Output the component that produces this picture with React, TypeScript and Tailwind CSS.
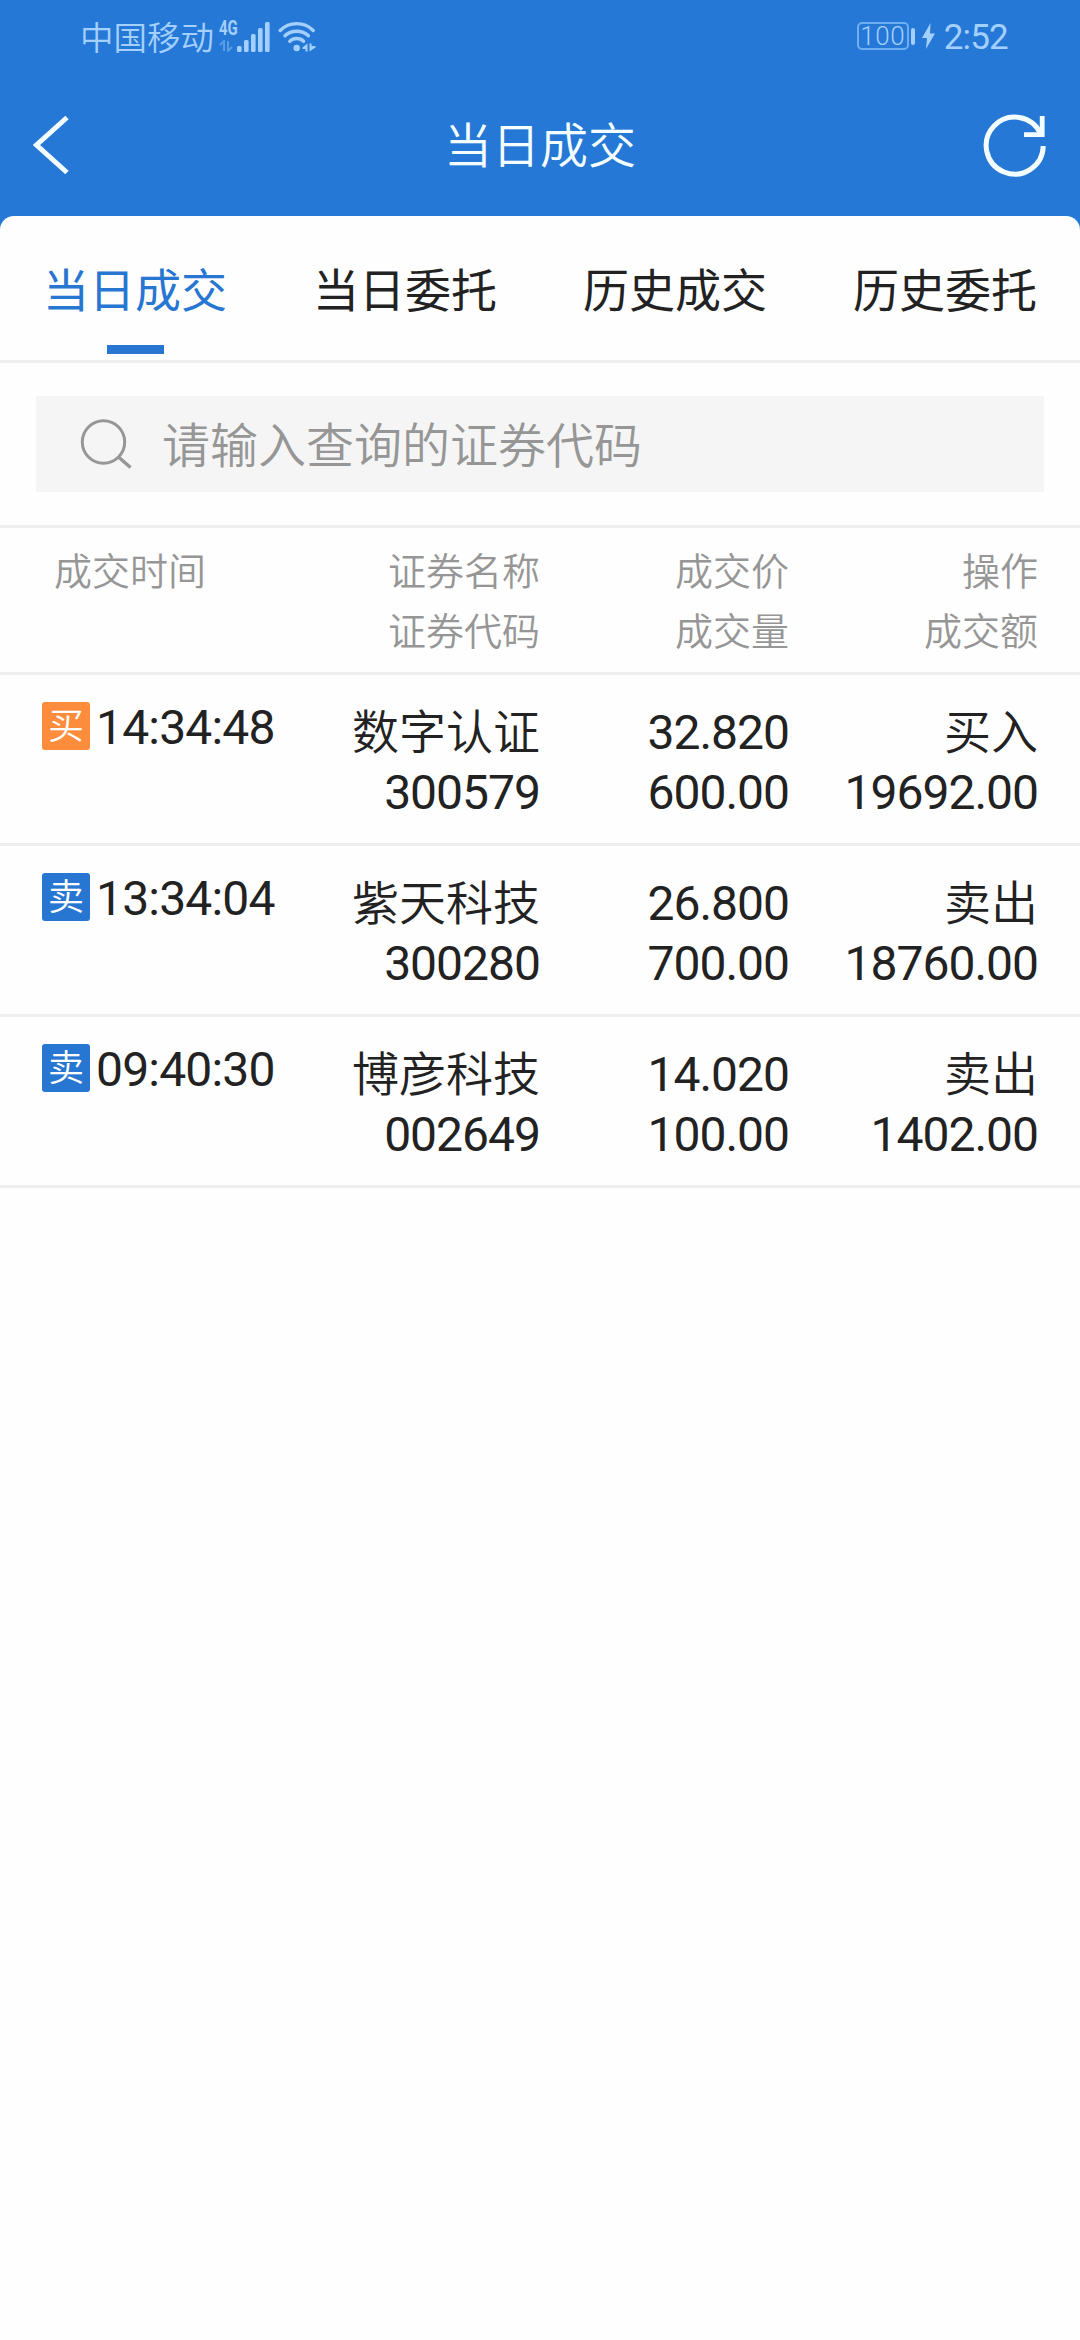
import classNames from 'clsx';
import type { FC, ReactNode } from 'react';

type Trade = {
  side: 'buy' | 'sell';
  time: string;
  name: string;
  code: string;
  price: string;
  volume: string;
  amount: string;
};

const tabs = ['当日成交', '当日委托', '历史成交', '历史委托'];

const trades: Trade[] = [
  {
    side: 'buy',
    time: '14:34:48',
    name: '数字认证',
    code: '300579',
    price: '32.820',
    volume: '600.00',
    amount: '19692.00',
  },
  {
    side: 'sell',
    time: '13:34:04',
    name: '紫天科技',
    code: '300280',
    price: '26.800',
    volume: '700.00',
    amount: '18760.00',
  },
  {
    side: 'sell',
    time: '09:40:30',
    name: '博彦科技',
    code: '002649',
    price: '14.020',
    volume: '100.00',
    amount: '1402.00',
  },
];

const StatusBar: FC = () => (
  <div className="flex h-[72px] items-center justify-between pl-20 pr-[72px] text-[#a3d0ff]">
    <div className="flex items-center">
      <span className="pt-[5px] text-[33.5px] leading-none font-[350]">中国移动</span>
      <div className="ml-[5px] flex h-[31px] w-[18px] flex-col items-start">
        <span className="origin-left scale-x-75 text-[20px] leading-[15px] font-bold">
          4G
        </span>
        <svg width="14" height="12" viewBox="0 0 14 12" className="mt-1 opacity-40">
          <path d="M1 5L5 1v10M9 1v10l4-4" fill="none" stroke="currentColor" strokeWidth="2" />
        </svg>
      </div>
      <svg width="33" height="31" viewBox="0 0 33 31" fill="currentColor">
        <rect x="0" y="25" width="4.6" height="6" rx="1.5" />
        <rect x="7" y="19" width="4.6" height="12" rx="1.5" />
        <rect x="14" y="13" width="4.6" height="18" rx="1.5" />
        <rect x="21" y="7" width="4.6" height="24" rx="1.5" />
        <rect x="28" y="1" width="4.6" height="30" rx="1.5" />
      </svg>
      <svg
        width="38"
        height="31"
        viewBox="0 0 38 31"
        fill="none"
        stroke="currentColor"
        strokeWidth="3.4"
        strokeLinecap="round"
        className="ml-2"
      >
        <path d="M2.2 9.5Q9 2.6 18.7 2.6T35.2 9.5" />
        <path d="M7 14.8q4.8-4.6 11.7-4.6t11.7 4.6" />
        <path d="M11.8 20.2q2.8-2.7 6.9-2.7t6.9 2.7" />
        <circle cx="18.7" cy="27" r="3.2" fill="currentColor" stroke="none" />
        <path
          d="M24.500 28v-1.500l5-4v8h-2v-2.500zM31.500 22.500h2v2.500h4v1.500l-6 4z"
          fill="currentColor"
          stroke="none"
        />
      </svg>
    </div>
    <div className="flex items-center">
      <div className="flex h-7 w-[52px] items-center justify-center rounded-[5px] border-2 border-[#6faef0] text-[26px] leading-none font-light tracking-[0.5px]">
        100
      </div>
      <div className="ml-0.5 h-[17px] w-1 rounded-full bg-[#a3d0ff]" />
      <svg width="13" height="26" viewBox="0 0 13 26" fill="currentColor" className="ml-[7px]">
        <path d="M8.5 0L0 15h5L4 26l9-15.5H8z" />
      </svg>
      <span className="ml-[9px] pt-0.5 text-[35px] leading-none tracking-[-0.8px]">
        2:52
      </span>
    </div>
  </div>
);

const NavBar: FC = () => (
  <div className="flex h-[144px] items-center justify-between pt-0.5 pr-[33px] pl-[33px]">
    <svg
      width="36"
      height="60"
      viewBox="0 0 36 60"
      fill="none"
      stroke="currentColor"
      strokeWidth="5"
    >
      <path d="M34 2.5L3.5 30L34 57.5" />
    </svg>
    <h1 className="pt-1 pl-7 text-[48px] leading-none font-[350]">当日成交</h1>
    <svg
      width="64"
      height="64"
      viewBox="0 0 64 64"
      fill="none"
      stroke="currentColor"
      strokeWidth="5"
    >
      <path d="M60.2 33A28.5 28.5 0 1 1 57.5 20.5" />
      <path d="M59.2 3v18.7H41" strokeWidth="4.8" />
    </svg>
  </div>
);

const Tabs: FC = () => (
  <div className="grid h-[147px] grid-cols-4 border-b-3 border-[#efefef]">
    {tabs.map((tab, index) => (
      <div
        key={tab}
        className={classNames(
          'flex flex-col items-center pt-[51px]',
          index === 0 ? 'text-[#2776d2]' : 'text-[#222222]'
        )}
      >
        <span className="text-[46px] leading-[48px]">{tab}</span>
        {index === 0 && <div className="mt-[30px] h-[9px] w-[57px] bg-[#2776d2]" />}
      </div>
    ))}
  </div>
);

const SearchBox: FC = () => (
  <div className="h-[165px] border-b-3 border-[#efefef] px-9 pt-[33px]">
    <div className="flex h-24 items-center bg-[#f5f5f5] pl-11 text-[#969696]">
      <svg
        width="54"
        height="54"
        viewBox="0 0 54 54"
        fill="none"
        stroke="currentColor"
        strokeWidth="3"
      >
        <circle cx="23.5" cy="25" r="21.2" />
        <path d="M39 40.5L50.5 50.5" strokeWidth="3.5" />
      </svg>
      <span className="ml-7 pt-[5px] text-[48px] leading-none font-[350]">
        请输入查询的证券代码
      </span>
    </div>
  </div>
);

type RowProps = { className: string; children: ReactNode };

const Row: FC<RowProps> = ({ className, children }) => (
  <div
    className={classNames(
      'grid grid-cols-[498px_249px_249px] border-b-3 border-[#efefef] pl-[42px] text-right leading-[60px]',
      className
    )}
  >
    {children}
  </div>
);

const TableHeader: FC = () => (
  <Row className="h-[147px] pt-[14px] text-[38px] font-[350] text-[#969696]">
    <div className="flex justify-between pl-3">
      <span>成交时间</span>
      <div>
        <div>证券名称</div>
        <div>证券代码</div>
      </div>
    </div>
    <div>
      <div>成交价</div>
      <div>成交量</div>
    </div>
    <div>
      <div>操作</div>
      <div>成交额</div>
    </div>
  </Row>
);

const TradeRow: FC<{ trade: Trade }> = ({ trade }) => {
  const isBuy = trade.side === 'buy';

  return (
    <Row className="h-[171px] pt-[27px] text-[48px] tracking-[-1px] text-[#222222]">
      <div className="flex items-start justify-between">
        <div className="flex items-start">
          <span
            className={classNames(
              'flex size-12 items-center justify-center rounded-[3px] pt-0.5 text-[36px] leading-none font-[350] tracking-normal text-white',
              isBuy ? 'bg-[#fd8c3c]' : 'bg-[#2776d2]'
            )}
          >
            {isBuy ? '买' : '卖'}
          </span>
          <span className="ml-1.5 leading-[51px] tracking-[-0.8px]">{trade.time}</span>
        </div>
        <div>
          <div className="pt-px text-[47px] font-[350] tracking-normal">{trade.name}</div>
          <div>{trade.code}</div>
        </div>
      </div>
      <div className="pt-px">
        <div>{trade.price}</div>
        <div>{trade.volume}</div>
      </div>
      <div>
        <div className="pt-px text-[47px] font-[350] tracking-normal">
          {isBuy ? '买入' : '卖出'}
        </div>
        <div>{trade.amount}</div>
      </div>
    </Row>
  );
};

const App: FC = () => (
  <div className="min-h-[2340px] w-[1080px] bg-[#2678d6] font-[Roboto,'Noto_Sans_CJK_SC',sans-serif]">
    <header className="text-[#f4fdff]">
      <StatusBar />
      <NavBar />
    </header>
    <main className="min-h-[2124px] rounded-t-[14px] bg-[#fefefe]">
      <Tabs />
      <SearchBox />
      <TableHeader />
      {trades.map((trade) => (
        <TradeRow key={trade.code} trade={trade} />
      ))}
    </main>
  </div>
);

export default App;
